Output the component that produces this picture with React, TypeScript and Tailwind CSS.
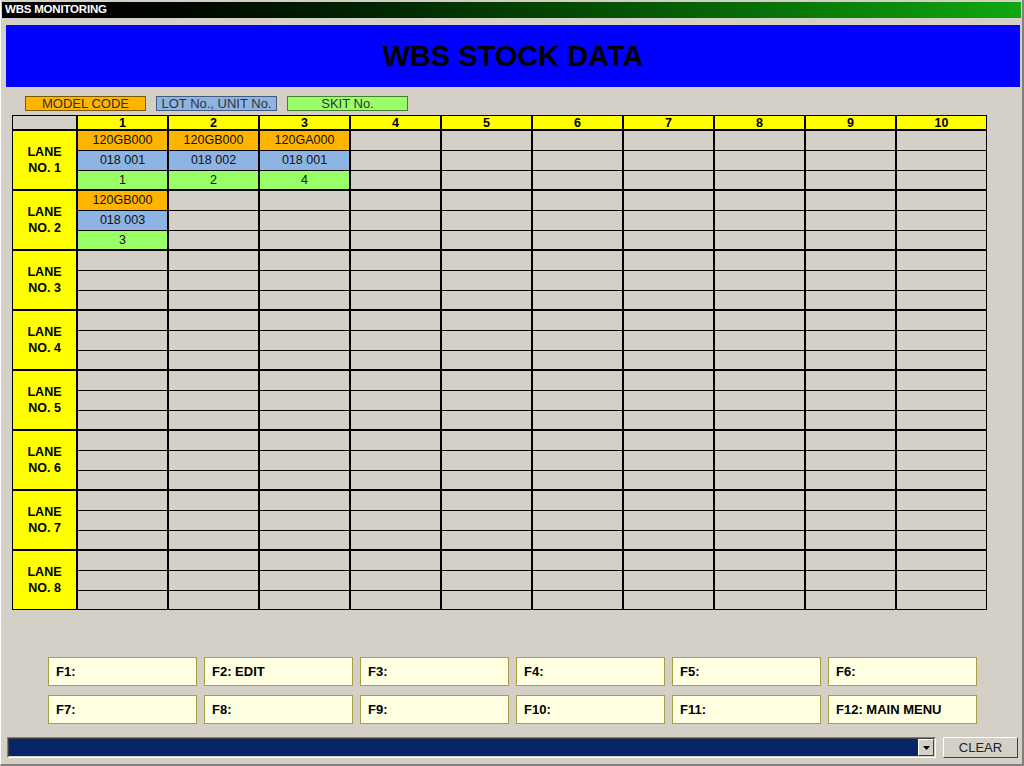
import React from "react";

const cols = [1, 2, 3, 4, 5, 6, 7, 8, 9, 10];
const lanes = [1, 2, 3, 4, 5, 6, 7, 8];

const stock: Record<string, { model: string; lot: string; skit: string }> = {
  "1-1": { model: "120GB000", lot: "018 001", skit: "1" },
  "1-2": { model: "120GB000", lot: "018 002", skit: "2" },
  "1-3": { model: "120GA000", lot: "018 001", skit: "4" },
  "2-1": { model: "120GB000", lot: "018 003", skit: "3" },
};

const fkeys = [
  ["F1:", "F2: EDIT", "F3:", "F4:", "F5:", "F6:"],
  ["F7:", "F8:", "F9:", "F10:", "F11:", "F12: MAIN MENU"],
];

const Cell = ({ lane, col }: { lane: number; col: number }) => {
  const item = stock[`${lane}-${col}`];
  return (
    <div className="flex flex-col gap-[1px] bg-black">
      <div
        className={`h-[19px] flex items-center justify-center text-[12.5px] ${
          item ? "bg-[#ffb400]" : "bg-[#d4d0c8]"
        }`}
      >
        {item?.model}
      </div>
      <div
        className={`h-[19px] flex items-center justify-center text-[12.5px] ${
          item ? "bg-[#8db4e2]" : "bg-[#d4d0c8]"
        }`}
      >
        {item?.lot}
      </div>
      <div
        className={`h-[18px] flex items-center justify-center text-[12.5px] ${
          item ? "bg-[#99ff66]" : "bg-[#d4d0c8]"
        }`}
      >
        {item?.skit}
      </div>
    </div>
  );
};

export default function App() {
  return (
    <div className="w-[1024px] h-[766px] bg-[#d4d0c8] flex flex-col border-l border-l-white border-r-2 border-r-[#808080] border-b-2 border-b-[#808080] font-['Liberation_Sans',Arial,sans-serif] text-[#111] overflow-hidden">
      {/* title bar */}
      <div className="mx-[1px] mt-[2px] h-[16px] bg-linear-to-r from-black to-[#10a810] flex items-center pl-[3px]">
        <span className="text-white text-[11.5px] font-bold tracking-[-0.2px]">WBS MONITORING</span>
      </div>

      {/* header */}
      <div className="ml-[5px] mr-[2px] mt-[7px] h-[62px] bg-[#0000ff] flex items-center justify-center">
        <h1 className="text-[29px] font-bold text-black pt-[1px]">WBS STOCK DATA</h1>
      </div>

      {/* legend */}
      <div className="mt-[9px] ml-[24px] flex gap-[10px] text-[13px]">
        <div className="w-[121px] h-[15px] bg-[#ffb400] border border-[#7a5a00] flex items-center justify-center text-[#333]">
          MODEL CODE
        </div>
        <div className="w-[121px] h-[15px] bg-[#8db4e2] border border-[#445a80] flex items-center justify-center text-[#333]">
          LOT No., UNIT No.
        </div>
        <div className="w-[121px] h-[15px] bg-[#99ff66] border border-[#4a8030] flex items-center justify-center text-[#333]">
          SKIT No.
        </div>
      </div>

      {/* stock grid */}
      <div className="mt-[4px] ml-[11px] w-[975px] bg-black p-[1px] grid grid-cols-[63px_repeat(10,89px)] grid-rows-[13px_repeat(8,58px)] gap-[2px]">
        <div className="bg-[#d4d0c8]" />
        {cols.map((c) => (
          <div
            key={c}
            className="bg-[#ffff00] flex items-center justify-center text-[12.5px] font-bold text-black leading-none pt-[2px]"
          >
            {c}
          </div>
        ))}
        {lanes.map((l) => (
          <React.Fragment key={l}>
            <div className="bg-[#ffff00] flex flex-col items-center justify-center text-[12.5px] font-bold text-black leading-[16px]">
              <span>LANE</span>
              <span>NO. {l}</span>
            </div>
            {cols.map((c) => (
              <Cell key={c} lane={l} col={c} />
            ))}
          </React.Fragment>
        ))}
      </div>

      {/* function keys */}
      <div className="mt-[47px] ml-[47px] flex flex-col gap-[9px]">
        {fkeys.map((row, i) => (
          <div key={i} className="flex gap-[7px]">
            {row.map((k) => (
              <div
                key={k}
                className="w-[149px] h-[29px] bg-[#ffffe1] border border-[#a8a040] flex items-center pl-[7px] text-[13px] font-bold text-black"
              >
                {k}
              </div>
            ))}
          </div>
        ))}
      </div>

      {/* bottom bar */}
      <div className="mt-[13px] ml-[6px] flex items-center gap-[7px]">
        <div className="w-[929px] h-[21px] border-t border-l border-t-[#808080] border-l-[#808080] border-b border-r border-b-white border-r-white">
          <div className="h-full border-t border-l border-t-[#404040] border-l-[#404040] border-b border-r border-b-[#d4d0c8] border-r-[#d4d0c8] bg-[#0a246a] flex justify-end items-stretch">
            <div className="w-[16px] bg-[#d4d0c8] border-t border-l border-t-white border-l-white border-b border-r border-b-[#404040] border-r-[#404040] flex items-center justify-center">
              <svg width="7" height="4" viewBox="0 0 7 4">
                <path d="M0 0h7L3.5 4z" fill="#000" />
              </svg>
            </div>
          </div>
        </div>
        <button className="w-[75px] h-[21px] bg-[#d4d0c8] border-t border-l border-t-white border-l-white border-b border-r border-b-[#404040] border-r-[#404040] text-[13px] text-[#222] flex items-center justify-center">
          CLEAR
        </button>
      </div>
    </div>
  );
}
